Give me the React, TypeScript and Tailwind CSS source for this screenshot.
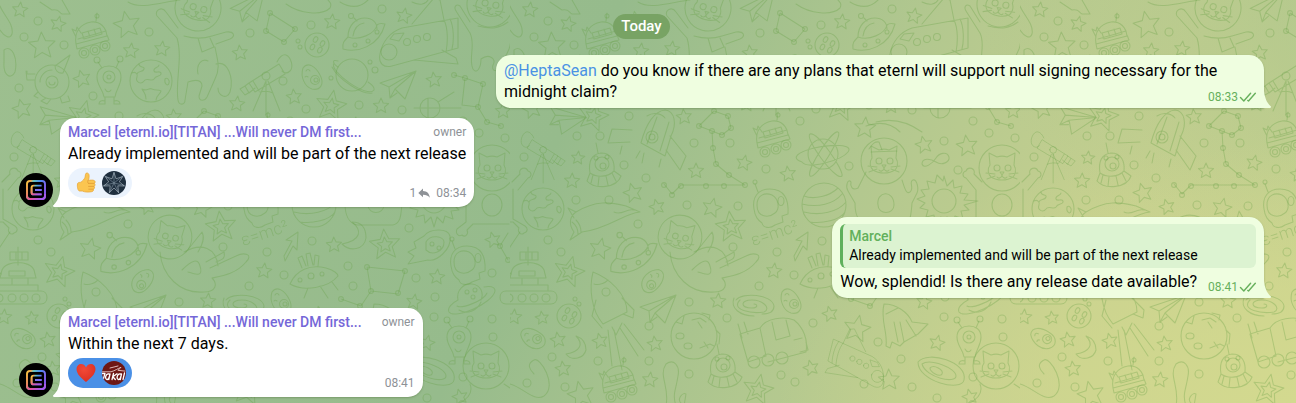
import React from "react";

type Dot = [number, number, number?];

const STARS: Dot[] = [
  [20, 10], [58, 24], [42, 46, 14], [127, 25, 14], [131, 51], [162, 49], [82, 79, 9], [240, 53], [332, 22], [404, 16],
  [22, 109, 10], [237, 104], [294, 97], [381, 106], [434, 80], [503, 111], [68, 158, 7], [62, 181], [123, 193, 10],
  [186, 171], [234, 163], [278, 174], [355, 128, 11], [174, 117], [147, 207], [202, 208, 10], [493, 240], [90, 249, 11],
  [264, 271], [414, 145, 9], [457, 146, 11], [437, 277], [4, 317], [32, 318, 7], [48, 340], [53, 369], [90, 341],
  [145, 344], [140, 380], [208, 301], [320, 314], [347, 329, 14], [301, 368], [379, 380, 11], [427, 343], [71, 395, 14],
  [460, 397], [334, 245], [414, 302],
];

const DOUBLE_STARS: Dot[] = [
  [83, 116, 16], [331, 106, 16], [221, 227, 16], [59, 272, 16], [385, 245, 16], [248, 390, 16],
];

const RINGS: Dot[] = [
  [38, 21], [24, 37], [64, 45], [149, 32], [250, 33], [311, 25], [382, 9], [283, 81], [19, 88], [93, 96], [119, 116],
  [306, 109], [359, 105], [402, 110], [375, 70, 3], [331, 78, 2], [370, 62, 2], [67, 136], [90, 136], [14, 157],
  [114, 165], [136, 178], [184, 143], [220, 143], [256, 169], [290, 121], [339, 166], [66, 200], [99, 200], [177, 205],
  [228, 206], [128, 224], [38, 240], [51, 252], [492, 273], [223, 247], [267, 252], [312, 241], [284, 275], [249, 286],
  [463, 121], [479, 133], [434, 141], [448, 170], [505, 138], [435, 297], [434, 317], [492, 319], [493, 337], [42, 357],
  [55, 387], [88, 361], [139, 326], [139, 361], [179, 302], [217, 318], [179, 374], [271, 375], [285, 382], [303, 323],
  [368, 342], [391, 359], [354, 384], [402, 387], [463, 377], [17, 383], [427, 398], [409, 228], [348, 266], [353, 286],
  [416, 278], [298, 41, 2], [300, 47, 2], [65, 299, 2], [69, 304, 2],
];

// joints of the constellations
const NODES: Dot[] = [
  [270, 13], [295, 29], [284, 42], [266, 31], [454, 75], [465, 78], [483, 84], [478, 107], [487, 122], [501, 126],
  [189, 126], [204, 111], [218, 116], [221, 128], [212, 135], [202, 131], [203, 148], [206, 164], [219, 175], [235, 185],
  [214, 186], [196, 186], [171, 186], [162, 195], [154, 185], [367, 267], [405, 271], [398, 293], [371, 291], [360, 306],
  [341, 299], [500, 246], [508, 260],
];

function starPoints(cx: number, cy: number, r: number) {
  const turn = ((cx * 7 + cy * 3) % 30) - 15;
  return Array.from({ length: 10 }, (_, i) => {
    const a = ((i * 36 - 90 + turn) * Math.PI) / 180;
    const d = i % 2 ? r * 0.46 : r;
    return `${(cx + d * Math.cos(a)).toFixed(1)},${(cy + d * Math.sin(a)).toFixed(1)}`;
  }).join(" ");
}

function Rover() {
  return (
    <g>
      <path d="M-16 6c-2-12 4-20 15-22 9-1 15 5 16 14zM-16 6l1 5 32-9-2-5M-14 1L14-7M-10-5l18-5 2 6-18 5zM-4-7l2 6M2-9l2 6M4-17l1-8M-16 -1l-4-8 4 2 1-4 4 6" />
      <circle cx="5" cy="-22" r="2" />
      <circle cx="-8" cy="15" r="5" /><circle cx="-8" cy="15" r="2.5" />
      <circle cx="3" cy="12" r="5" /><circle cx="3" cy="12" r="2.5" />
      <circle cx="13" cy="8" r="5" /><circle cx="13" cy="8" r="2.5" />
    </g>
  );
}

function Earth() {
  return (
    <g>
      <circle r="21" />
      <path d="M-19-8c4-2 6 2 5 4-2 5 4 8 7 4 2-4 8 1 10-2 2-4 8-2 7-6-1-3-6 1-7-2-1-4 5-3 5-6M-12-17c0 4 6 2 5 5-1 4-6 1-7 5M-9 8c5 3 7-2 10 0 4 2 6 0 9 2-1 4-4 3-5 9M-9 8c2 4 4 4 4 10M14-2c2-2 5 1 4 4-1 4-5 1-4-4z" />
    </g>
  );
}

function Saucer() {
  return (
    <g>
      <path d="M-16 2c0-12 8-19 17-19 7 0 12 4 12 11M-16 2c-4 4-6 6-5 12 14 4 36-2 42-25-4-1-6-1-8 1-2 9-18 16-29 12zM-11 1c1-7 5-12 11-13M-10-17l3 3" />
      <circle cx="-13" cy="-19" r="2.5" />
      <circle cx="-9" cy="10" r="2" /><circle cx="4" cy="6" r="2" /><circle cx="13" cy="-3" r="2" />
    </g>
  );
}

function Telescope() {
  return (
    <g>
      <path d="M-16 8l30-19 6 10-30 18zM-16 8l-4 3 4 7 6-5M-20 11l-5 3 5 6 5-3M12-13c2-5 6-8 9-7 5 2 8 12 4 16-3 3-6 2-8 0M-12 6l6 10M1 6l-13 30M1 6v34M3 6l12 30M-5 17c4-1 9-1 13 1" />
      <circle cx="1" cy="1" r="4" />
    </g>
  );
}

function PaperPlane() {
  return <path d="M-18 0L18-12 7 16-3 6 18-12-9 4-8 15-3 6M-18 0l9 4M-8 15l7-5" />;
}

function Bean() {
  return (
    <g>
      <path d="M-9-9c5-7 13-1 17 7 5 9 0 16-8 14-7-2-12-12-9-21z" />
      <circle cx="3" cy="3" r="4.5" /><circle cx="4" cy="3" r="2" />
      <path d="M-6-6c1-2 3-2 4 0M-7 0c1-1 2-1 3 0" />
    </g>
  );
}

function CatHead() {
  return (
    <g>
      <circle r="23" />
      <path d="M-12-3l-1-12 8 4c3-1 7-1 10 0l8-4-1 12c3 5 1 10-1 12-6 4-16 4-22 0-3-3-4-8-1-12zM-2 4h4l-2 3zM0 7c0 3-4 4-5 2M0 7c0 3 4 4 5 2M-7 6l-9-1M-7 8l-8 3M7 6l9-1M7 8l8 3" />
      <circle cx="-5" cy="0" r="3" /><circle cx="6" cy="0" r="3" />
    </g>
  );
}

function Cookie() {
  return (
    <g>
      <circle r="12" />
      <ellipse cx="-4" cy="-4" rx="2" ry="3" transform="rotate(30)" /><ellipse cx="4" cy="-4" rx="2" ry="3" transform="rotate(30)" />
      <ellipse cx="-3" cy="4" rx="2" ry="3" transform="rotate(30)" /><ellipse cx="5" cy="3" rx="2" ry="3" transform="rotate(30)" />
    </g>
  );
}

function Alien() {
  return (
    <g>
      <path d="M-12-4c0-8 6-11 12-11s12 3 12 11C12 5 7 8 6 16H-5c-1-8-7-11-7-20zM-7-13l-4-6M7-13l3-7M-4 16v7h-6c0-3 3-4 6-3M5 16v7h6c0-3-3-4-6-3M-4 8c2 4 5 3 6 1" />
      <circle cx="-12" cy="-21" r="3" /><circle cx="11" cy="-22" r="3" />
      <circle cx="0" cy="-4" r="6" /><circle cx="0" cy="-4" r="2" />
    </g>
  );
}

function BearShip() {
  return (
    <g>
      <path d="M-12 6c-2-12 2-19 11-20 10 0 14 8 13 18M-12 6c7 5 18 4 24-2l7 5c-4 12-26 14-34 5zM-9 8l-2 8M-3 10l-1 9M4 9l2 9M10 6l4 8M-4-14l-2-10" />
      <circle cx="0" cy="-3" r="7" /><circle cx="1" cy="-1" r="3" />
      <circle cx="-6" cy="-9" r="2" /><circle cx="5" cy="-10" r="2" />
    </g>
  );
}

function Saturn() {
  return (
    <g>
      <circle r="16" />
      <path d="M-14-8c-6-4-6-8 0-6M-18-12c-6 8 34 36 40 27 1-3-3-6-6-8M-20-8C-14 4 10 20 20 18" />
    </g>
  );
}

function Shuttle() {
  return (
    <g>
      <path d="M-40 14c-2 10 4 14 12 12L38 8V-22L-18-12c-12 4-20 14-22 26zM-8-16L14-42l6 2 4 20M-6 20l44 4-2-6-14-8M-26-6l10-1-5 8-9-2zM24-20c4 8 4 22 2 32M30-21c4 8 4 22 2 30" />
      <circle cx="-31" cy="12" r="8" />
      <circle cx="-13" cy="2" r="3.5" /><circle cx="-3" cy="-1" r="3.5" /><circle cx="7" cy="-3" r="3.5" />
    </g>
  );
}

function Helmet() {
  return (
    <g>
      <path d="M-17 6c-2-12 4-20 16-20 14 0 19 10 18 25l-6 2 1 6-8 3c-5 4-12 3-13-2-4-3-7-6-8-14zM-14 2c0-10 8-13 15-10 7 4 8 14 3 18-6 5-18 5-18-8zM-13-11l-3-8" />
      <circle cx="-16" cy="-21" r="2" /><ellipse cx="10" cy="-2" rx="3" ry="4.5" />
    </g>
  );
}

function RingedSpot() {
  return (
    <g>
      <path d="M-13 2c-2-10 6-17 14-16 9 1 12 9 9 16M-13 2c-6 3-11 8-9 12 6 8 44-9 46-21 0-5-6-5-11-4M-14 8c4 3 27-5 30-13M-12 12c8 5 18 1 22-8" />
      <circle cx="-4" cy="-6" r="2" /><circle cx="4" cy="-8" r="2" /><circle cx="2" cy="-1" r="2" />
    </g>
  );
}

const GLYPHS: [React.FC, string][] = [
  [Rover, "translate(92 38)"], [Rover, "translate(263 137)"], [Rover, "translate(109 382)"],
  [Earth, "translate(151 81)"], [Earth, "translate(33 209)"],
  [Saucer, "translate(364 35)"], [Saucer, "translate(124 256) scale(1.1)"],
  [Telescope, "translate(265 75)"], [Telescope, "translate(34 149) scale(-.85 .85)"],
  [PaperPlane, "translate(398 83)"], [PaperPlane, "translate(148 307)"], [PaperPlane, "translate(248 6) rotate(-8)"],
  [PaperPlane, "translate(55 117) rotate(35)"],
  [Bean, "translate(312 77)"], [Bean, "translate(143 281) rotate(70)"], [Bean, "translate(23 338) rotate(-30)"],
  [Bean, "translate(281 301)"],
  [CatHead, "translate(198 8) rotate(15)"], [CatHead, "translate(490 4) rotate(12)"], [CatHead, "translate(492 168)"],
  [CatHead, "translate(374 161)"], [CatHead, "translate(170 237) scale(.95) rotate(12)"], [CatHead, "translate(486 366)"],
  [Cookie, "translate(317 45)"], [Cookie, "translate(59 316)"],
  [Alien, "translate(109 81)"], [Alien, "translate(459 341)"],
  [BearShip, "translate(92 167)"], [BearShip, "translate(213 368)"],
  [Saturn, "translate(352 75)"],
  [Shuttle, "translate(420 40)"], [Shuttle, "translate(347 362) scale(-.75 .75) rotate(-14)"],
  [Helmet, "translate(261 203)"], [Helmet, "translate(468 260)"],
  [RingedSpot, "translate(471 298)"],
];

const SKETCHES = [
  // cats
  "M178 28l-12-16c-4-6-12-2-9 4l20 22c6 20-2 44 1 62 1 6 7 5 7 0l3-18c8-3 14-2 14 4l-3 10c0 6 6 5 8 1l8-18c6-12 2-20 0-32M184 36c14 4 22 2 28 0l14-4c8-1 10 4 4 7l-14 5M198 38l4 14 12-5-4-9M198 74c-2-10 4-16 10-13M216 64c12-4 18 14 14 28-3 8-12 4-12-4",
  "M470 22l-10-16c-5-3-6 2-4 5l14 22c6 12-2 26 3 36 4 6 8-2 8-10 8-6 16 0 12 6-2 6 4 8 8 2l8-18c4-10 0-22 4-26M478 26c14 4 22 2 30-4",
  "M472 182l-8-8c2-6-6-8-8-3-4 1-4 6 0 7l10 12v32l-9 7c-2 5 2 8 5 6 3 3 7-1 5-5l6-6h36M482 205a10 11 0 1 0 20 0 10 11 0 1 0-20 0",
  "M2 182l8-8c-2-6 6-8 8-3 4 1 4 6 0 7l-10 12M-1 222h4l6 6c-2 4 2 8 5 5 4-1 4-5 1-7l-12-7v-30",
  "M356 172l-8 16c-6 3-8-2-7-6-3-4-6 4-3 9l7 12c0 14 4 20 12 22h36c8-2 8-10 9-22l5-10c2-4 0-14-4-13-5 2 2 8-3 12-4 3-6-6-8-12M368 205c-2-14 16-16 16 0 0 10-16 10-16 0zM361 152l26-1M359 149c3-4 5-8 10-7l3 8",
  "M160 252c2 24 20 42 44 40 12 0 14-8 8-14 10-2 24-4 34-16 8-8-2-10-10-6l-26 12M184 252c18-10 32-4 34 14M182 270c10-10 16-12 18-4 4 12-6 8-12 6M186 252l16-20c4 8-2 16-4 20M206 262l18-10c2 8-4 8-8 10",
  "M470 384c4 10-4 16-12 20M504 384l6 4M0 384c14 4 24 18 34 12 14-10-4-40-10-36-8 4-4 10 0 14",
  // one-eyed alien
  "M35 82a17 17 0 1 0 34 0 17 17 0 1 0-34 0M40 82a12 12 0 0 1 12-12M55 66l15-11-7 18c-5 1-8-3-8-7zM35 74h-8v-3M35 80h-8l-1-9M46 98l-5 3 6 3 4-5M60 97l2 6 8-2-2-5M38 92l-4 4 4 2M46 82a6 6 0 1 0 12 0 6 6 0 1 0-12 0M49 82a3 3 0 1 0 6 0",
  // constellations
  "M270 13l25 16-11 13-18-11z",
  "M454 75l11 3 18 6-5 23-16-2 3-27M478 107l9 15 14 4",
  "M189 126l15-15 14 5 3 12-9 7-10-4zM202 131l1 17 3 16 13 11 16 10H171l-9 9-8-10",
  "M367 267l38 4-7 23-27-3zM371 291l-10 15-20-7",
  "M508 233l-8 13 8 14M10 232l-10 15-10 14 11 13",
  // winged rocket
  "M131 143c5-20 14-32 24-33 10 1 12 14 6 26l-6 20zM122 130l-20-1-4 14 22-1M160 136l16 20-6 14-14-20M137 144l10-27M150 151l9-29M130 151l-4 7M134 153l-2 10M151 159l-2 8M112 146l-2 8M137 116c6-4 14-3 18 2",
  "M136 137a6 6 0 1 0 12 0 6 6 0 1 0-12 0M139 137a3 3 0 1 0 6 0 3 3 0 1 0-6 0",
  // atom
  "M298 154a15 15 0 1 0 30 0 15 15 0 1 0-30 0M292 162c-12-4-4-10 12-14 18-4 40-4 34 4-6 8-40 18-46 10zM300 134c8-2 34 36 32 42-6 6-38-38-32-42zM328 132c6 2-22 48-28 44-4-6 22-46 28-44z",
  // striped planet
  "M292 205a22 22 0 1 0 44 0 22 22 0 1 0-44 0M294 196c10 4 26 0 34-8M292 204c16 4 32 0 40-10M294 212c16 4 34 0 42-10M300 222c12 2 30-2 35-10",
  // sun
  "M422 201a12 12 0 1 0 24 0 12 12 0 1 0-24 0M434 176l3 10 6-6 1 8 8-2-2 7 8 1-4 6 14 1-14 4 5 5-8 1 2 8-8-3-2 7-6-6-3 10-3-10-6 6-1-8-8 2 2-7-8-2 5-5-8-4 8-3-4-6 8-1-2-8 8 2 2-8 6 6z",
  // infinity and arrow
  "M412 164c0-6 8-6 14-2s14 0 13-5c-2-6-10-4-13 1s-12 12-14 6zM284 256l8-15-6-1 12-8-1 18-4-4-8 15z",
  // side rocket
  "M66 212c20-12 34-10 50-6l14 6c-18 2-30 16-58 20l-12 8 4-8c-6-8-4-16 2-20zM66 212l-8-4 6 10M104 212c8 4 12-4 20-2M62 222c4 3 6 8 6 12M66 220c3 3 5 8 5 12",
  // comets and moons
  "M366 122c16-4 32 0 46 10M356 126c14-5 26-2 34 6",
  "M424 236c6-8 24-8 26 0 2 14-14 26-22 24l-20 4 6-8-6-4 8-4-2-6zM426 242c4-8 18-6 18 0 0 10-12 14-18 8zM430 244a2 2 0 1 0 4 0 2 2 0 1 0-4 0M437 248a2 2 0 1 0 4 0 2 2 0 1 0-4 0",
  "M352 222c10 8 10 18-10 22 8 8 22 6 24-6 0-12-6-16-14-16zM66 336c8 8 4 16-10 18 6 8 18 4 20-4 0-8-4-12-10-14z",
  // tracked robot
  "M-3 291h44c8 0 8 13 0 13h-44c-8 0-8-13 0-13zM-2 291v-6h40v6M0 278h36l-2-8c-4-10-28-10-32 0zM12 278v6M28 278v6M9 276h16v-5H9zM18 265v-18M10 252h18v8H10zM16 252v8M22 252v8",
  "M510 291h-4c-8 0-8 13 0 13h4",
  "M-5 298a4 4 0 1 0 8 0 4 4 0 1 0-8 0M8 298a4 4 0 1 0 8 0 4 4 0 1 0-8 0M20 298a4 4 0 1 0 8 0 4 4 0 1 0-8 0M32 298a4 4 0 1 0 8 0 4 4 0 1 0-8 0",
  // rocket with exhaust
  "M83 272c16 6 34 22 34 40l-24 12c-12-14-14-36-10-52zM84 284c6 2 12-2 14-4M86 300l-4 16 10 12M112 298l12 12-1 8-10-4M102 327l4 8 6-12M98 330l4 36M104 330l8 40M110 328l18 28M114 324l20 26M92 292a4 4 0 1 0 8 0 4 4 0 1 0-8 0",
  // cratered moon
  "M161 336a23 23 0 1 0 46 0 23 23 0 1 0-46 0M192 313l8 2-1 5M206 330l4 4-1 10M166 322l6 2 2-8M182 320l8-2 6 4M188 322l4 6M166 336a4 3 0 1 0 8 0 4 3 0 1 0-8 0M174 346a4 3 0 1 0 8 0 4 3 0 1 0-8 0M190 348l10-4 4 2M194 342l4 6",
  // galaxy
  "M226 300c6-8 36-6 38 6 0 8-10 8-12 8M230 300c-10 10 12 14 24 12 8-4-2-12-12-12-12 0-12 8 0 8 6 0 6-4 2-4M224 298c-4 10 6 18 20 18",
  // truck
  "M230 334l20-6 6 28-18 6zM228 324l4 14M234 322l4 12M250 328c6-10 24-12 34-8 10 8 14 20 12 32l-38 10M262 322l4 18 14-4-4-16M284 340l8-2M238 362a6 6 0 1 0 12 0 6 6 0 1 0-12 0M252 360a6 6 0 1 0 12 0 6 6 0 1 0-12 0M266 358a6 6 0 1 0 12 0 6 6 0 1 0-12 0M290 352l8-2-2-8",
  // landing ship
  "M290 284c6-14 20-20 36-16 8 2 12 6 12 8-10 12-34 16-48 8zM302 268l-4-10 4-2 4 10M308 266l-2-12 4-1 3 12M314 265l1-10 4 1-1 10M308 288l-4 10M320 286l8 12M332 282l6 8M298 280a2 2 0 1 0 4 0 2 2 0 1 0-4 0M308 276a3 3 0 1 0 6 0 3 3 0 1 0-6 0M320 274a2 2 0 1 0 4 0 2 2 0 1 0-4 0",
  // small rocket
  "M374 304c12 0 24 8 28 18l16 2-10 10-14 8-4 4-8-4-2 6-4-2c2-14-6-26-2-42zM376 314l12-6M390 322l4 20M396 320l10 16M384 322l4 20",
  // disc ship
  "M408 362c10-12 50 0 46 18-2 12-46 2-46-18zM412 364c8-6 34 4 34 12 0 8-30 2-34-12zM420 368c4-4 14 2 12 6s-12-2-12-6z",
  // sputnik
  "M420 108a10 10 0 1 0 20 0 10 10 0 1 0-20 0M414 108h47M428 98v20M438 102l16-10",
  // limbs and ships cut by the top edge
  "M156 364c8-6 14 2 12 12-2 14-6 18-2 30M156 364c-8 12 4 22 0 42M172 404c-6-4 0-12 4-10l-2 12M0 6c4 10 14 18 12 28-2 6-8 2-12-4M4 50c8-6 14 8 11 22-4 8-12 4-11-10zM40 2l12 8c8-1 6 2 10 4l8 0-8-14M128 2c12 8 34 0 52-2M286 4c14 10 36 12 44 4 2-4 0-6-2-8M340 2c10 6 20 6 28-2M412 2c8 4 14 2 16-2",
];

function Wallpaper() {
  return (
    <svg className="absolute inset-0 h-full w-full" aria-hidden="true">
      <defs>
        <pattern id="space-doodles" width="510" height="640" patternUnits="userSpaceOnUse">
          <g fill="none" stroke="#5f9c3e" strokeOpacity="0.3" strokeWidth="1.1" strokeLinejoin="round" strokeLinecap="round">
            {STARS.map(([x, y, r = 8], i) => <polygon key={i} points={starPoints(x, y, r)} />)}
            {DOUBLE_STARS.map(([x, y, r = 16], i) => (
              <g key={i}>
                <polygon points={starPoints(x, y, r)} />
                <polygon points={starPoints(x, y, r / 2)} />
              </g>
            ))}
            {RINGS.map(([x, y, r = 4], i) => <circle key={i} cx={x} cy={y} r={r} />)}
            {NODES.map(([x, y], i) => <circle key={i} cx={x} cy={y} r={2.4} />)}
            {GLYPHS.map(([Glyph, transform], i) => <g key={i} transform={transform}><Glyph /></g>)}
            {SKETCHES.map((d, i) => <path key={i} d={d} />)}
            <text x="243" y="246" transform="rotate(-18 243 246)" fontFamily="Roboto, sans-serif" fontSize="17" fontWeight="300" fill="#5f9c3e" fillOpacity="0.3" stroke="none">ε=mc²</text>
          </g>
        </pattern>
      </defs>
      <rect width="100%" height="100%" fill="url(#space-doodles)" />
    </svg>
  );
}

function Tail({ side, className }: { side: "left" | "right"; className: string }) {
  return (
    <svg
      viewBox="0 0 7 17"
      aria-hidden="true"
      className={`absolute bottom-0 h-[17px] w-[7px] ${side === "right" ? "left-full" : "right-full -scale-x-100"} ${className}`}
    >
      <path fill="currentColor" d="M6 17H0V0c.193 2.84.876 5.767 2.05 8.782.904 2.325 2.446 4.485 4.625 6.48A1 1 0 0 1 6 17z" />
    </svg>
  );
}

function Ticks() {
  return (
    <svg viewBox="0 0 17 12" className="h-3 w-[17px]" fill="none" stroke="currentColor" strokeWidth="1.4" strokeLinecap="round" strokeLinejoin="round" aria-label="Read">
      <path d="M1.500 6.600L4.800 10 11.600 2.200M8.800 9.500l.7.500L16.300 2.200" />
    </svg>
  );
}

function SentMeta({ time }: { time: string }) {
  return (
    <span className="flex shrink-0 items-center gap-px text-xs leading-4 text-[#67b05c]">
      <time>{time}</time>
      <Ticks />
    </span>
  );
}

function Avatar() {
  return (
    <svg viewBox="0 0 34 34" className="mr-[7px] size-[34px] shrink-0" role="img" aria-label="Marcel">
      <defs>
        <linearGradient id="logo-stroke" x1="0" y1="0.1" x2="1" y2="0.5">
          <stop offset="0" stopColor="#f6c445" />
          <stop offset="0.12" stopColor="#f0a04a" />
          <stop offset="0.3" stopColor="#5fc4c0" />
          <stop offset="0.6" stopColor="#4f8df0" />
          <stop offset="1" stopColor="#8a5cf0" />
        </linearGradient>
        <linearGradient id="logo-warm" x1="0" y1="0" x2="0.7" y2="1">
          <stop offset="0" stopColor="#f7b245" stopOpacity="0" />
          <stop offset="0.45" stopColor="#f08a5a" />
          <stop offset="0.75" stopColor="#e5559a" />
          <stop offset="1" stopColor="#a65bea" />
        </linearGradient>
      </defs>
      <circle cx="17" cy="17" r="17" fill="#000" />
      <g fill="none" strokeWidth="1.9" strokeLinejoin="round">
        <rect x="8" y="8" width="18" height="18" rx="3" stroke="url(#logo-stroke)" />
        <path d="M22.6 12.6h-8a2 2 0 0 0-2 2v4.8a2 2 0 0 0 2 2h8M16 17h6.6" stroke="url(#logo-stroke)" />
        <path d="M16 17.100L22.600 16.900" stroke="#7a6cf0" />
        <path d="M8 9v14a3 3 0 0 0 3 3h12a3 3 0 0 0 3-3v-2" stroke="url(#logo-warm)" />
        <path d="M12.6 13v6.400a2 2 0 0 0 2 2h8" stroke="url(#logo-warm)" />
      </g>
    </svg>
  );
}

function Thumb() {
  return (
    <svg viewBox="0 0 20 22" className="h-[22px] w-5" aria-hidden="true">
      <path d="M1.500 12c0-1.200 1.200-1.700 2.800-1.600 2.400-.9 3.900-3.300 4.800-5.200.3-1.400 0-4.200 1.800-4.200 2.600 0 2.700 3.700 1.500 7.400 1.800-.3 4.300-.5 5.600 0 1.500.6 1.500 2.500.3 3.100 1.100.8.9 2.400-.2 2.900.8.9.4 2.400-.7 2.800.4 1.300-.4 2.200-1.800 2.500-3 .6-7 .5-9.200-.7H3.600c-1.800 0-2.500-4.200-2.100-7z" fill="#fbc550" stroke="#e8a83c" strokeWidth=".8" />
      <path d="M12.600 11.400h5.300M12.600 14.400h5M12.800 17.200h4.100M12 8.500c-.6 1.500-.4 2.700.6 3" fill="none" stroke="#df9a35" strokeWidth=".8" strokeLinecap="round" />
    </svg>
  );
}

function Heart() {
  return (
    <svg viewBox="0 0 20 20" className="size-5" aria-hidden="true">
      <defs>
        <radialGradient id="heart-fill" cx=".4" cy=".3" r=".8">
          <stop offset="0" stopColor="#f24a38" />
          <stop offset="1" stopColor="#d92d20" />
        </radialGradient>
      </defs>
      <path d="M10 19C6 15.600.5 11.500.5 6 .5 3 2.500 1 5 1c2.200 0 4 1.200 5 3.400C11 2.200 12.800 1 15 1c2.500 0 4.500 2 4.500 5 0 5.500-5.500 9.600-9.500 13z" fill="url(#heart-fill)" />
    </svg>
  );
}

function WebPicture() {
  return (
    <svg viewBox="0 0 24 24" className="size-6" aria-hidden="true">
      <circle cx="12" cy="12" r="12" fill="#1f2f3f" />
      <g fill="none" stroke="#8193a3" strokeWidth=".6">
        <path d="M12 12V1M12 12l8.600-6.800M12 12l10.700 2.500M12 12l4.800 10M12 12L7.200 22M12 12L1.300 14.500M12 12L3.400 5.200" />
        <path d="M12 1.500l2 6.300 6.800-2.300-3.500 5.300 5 4.200-6.500-.2.700 6.800L12 17l-4.500 4.600.7-6.800-6.500.2 5-4.200-3.500-5.300L10 7.800z" stroke="#b5c2cd" />
      </g>
    </svg>
  );
}

function RedPicture() {
  return (
    <svg viewBox="0 0 24 24" className="size-6" aria-hidden="true">
      <defs>
        <clipPath id="red-disc"><circle cx="12" cy="12" r="12" /></clipPath>
      </defs>
      <circle cx="12" cy="12" r="12" fill="#6e1714" />
      <g clipPath="url(#red-disc)" fill="none" stroke="#fff" strokeLinecap="round" strokeLinejoin="round">
        <path d="M0 10.800h9c4-1 7-3.500 10-4.500l-3 3 7 .8M8 7l8-2" strokeWidth=".9" stroke="#e8c9c6" />
        <path d="M0 12.500h3l-1.500 5M7 13c-3.500-.5-4.500 5-2 5.500 1.500.2 2.500-3 3-5.500l-1.200 5.500M11.500 12.500l-1.500 6M15 12.800l-4.200 2.900 2.500 2.800M18.500 13c-3.500-.5-4.500 5-2 5.500 1.500.2 2.500-3 3-5.500l-1.200 5.500M22.500 12l-1.500 6.500" strokeWidth="1.300" />
      </g>
    </svg>
  );
}

function Reactions({ mine, label, children }: { mine?: boolean; label: string; children: React.ReactNode }) {
  return (
    <button
      type="button"
      aria-label={label}
      className={`flex h-[30px] items-center gap-1.5 rounded-full pr-1.5 pl-2 ${mine ? "bg-[#4a90e6]" : "bg-[#ebf3fd]"}`}
    >
      {children}
    </button>
  );
}

function Received({ text, time, replies, children }: { text: string; time: string; replies?: number; children: React.ReactNode }) {
  return (
    <article className="flex items-end">
      <Avatar />
      <div className="relative rounded-[15px] rounded-bl-none bg-white px-2 pt-1 pb-1.5 shadow-[0_1px_2px_rgba(80,110,60,0.4)]">
        <Tail side="left" className="text-white" />
        <header className="flex items-center justify-between gap-5 leading-5">
          <a href="#marcel" className="text-sm leading-5 font-medium text-[#7567d8]">Marcel [eternl.io][TITAN] ...Will never DM first...</a>
          <span className="text-xs leading-5 text-[#8e9297]">owner</span>
        </header>
        <p className="leading-6">{text}</p>
        <footer className="mt-0.5 flex items-end justify-between">
          <div className="pb-[3px]">{children}</div>
          <span className="flex items-center gap-1.5 text-xs leading-4 text-[#8e9297]">
            {replies && (
              <span className="flex items-center gap-0.5">
                {replies}
                <svg viewBox="0 0 12 10" className="h-2.5 w-3" fill="currentColor" aria-label="replies">
                  <path d="M5 .4v2.500c4 .1 6.400 2.400 6.800 6.900-1.700-2.200-3.700-3-6.800-3v2.500L.3 4.900z" />
                </svg>
              </span>
            )}
            <time>{time}</time>
          </span>
        </footer>
      </div>
    </article>
  );
}

const SENT = "relative rounded-[15px] rounded-br-none bg-[#effee0] px-2 shadow-[0_1px_2px_rgba(80,110,60,0.4)]";

export default function App() {
  return (
    <main className="relative min-h-screen bg-[radial-gradient(ellipse_520px_260px_at_100%_100%,#d3d98f_0%,rgba(211,217,143,0)_100%),radial-gradient(ellipse_420px_300px_at_108%_0%,rgba(160,192,140,0.6)_0%,rgba(160,192,140,0)_100%),linear-gradient(115deg,#9dbf8f_0%,#96bb8c_42%,#b3c88f_64%,#c6d08f_82%,#ccd48f_100%)] text-base text-black [font-family:Roboto,sans-serif]">
      <Wallpaper />
      <div className="relative flex flex-col gap-2.5 pt-3.5 pr-8 pb-1.5 pl-[19px]">
        <h1 className="mb-1.5 self-center rounded-full bg-[#78a364] px-2 text-[15px] leading-[25px] font-medium text-white">Today</h1>

        <article className="flex justify-end">
          <div className={`${SENT} max-w-[768px] pt-[5px] pb-[3px]`}>
            <Tail side="right" className="text-[#effee0]" />
            <p className="leading-[21px]">
              <a href="#heptasean" className="text-[#4a92e4]">@HeptaSean</a> do you know if there are any plans that eternl will support null signing necessary for the midnight claim?
              <span className="float-right mt-2"><SentMeta time="08:33" /></span>
            </p>
          </div>
        </article>

        <Received text="Already implemented and will be part of the next release" time="08:34" replies={1}>
          <Reactions label="Thumbs up">
            <Thumb />
            <WebPicture />
          </Reactions>
        </Received>

        <article className="flex justify-end">
          <div className={`${SENT} pt-[7px] pb-[3px]`}>
            <Tail side="right" className="text-[#effee0]" />
            <blockquote className="overflow-hidden rounded-md border-l-[3px] border-[#5fb05c] bg-[#dcf3d1] px-1.5 py-[3px] text-sm leading-[19px]">
              <p className="font-medium text-[#62b05c]">Marcel</p>
              <p>Already implemented and will be part of the next release</p>
            </blockquote>
            <div className="mt-[3px] flex items-end justify-between gap-[11px]">
              <p className="pb-[3px] leading-[21px]">Wow, splendid! Is there any release date available?</p>
              <SentMeta time="08:41" />
            </div>
          </div>
        </article>

        <Received text="Within the next 7 days." time="08:41">
          <Reactions mine label="Red heart">
            <Heart />
            <RedPicture />
          </Reactions>
        </Received>
      </div>
    </main>
  );
}
